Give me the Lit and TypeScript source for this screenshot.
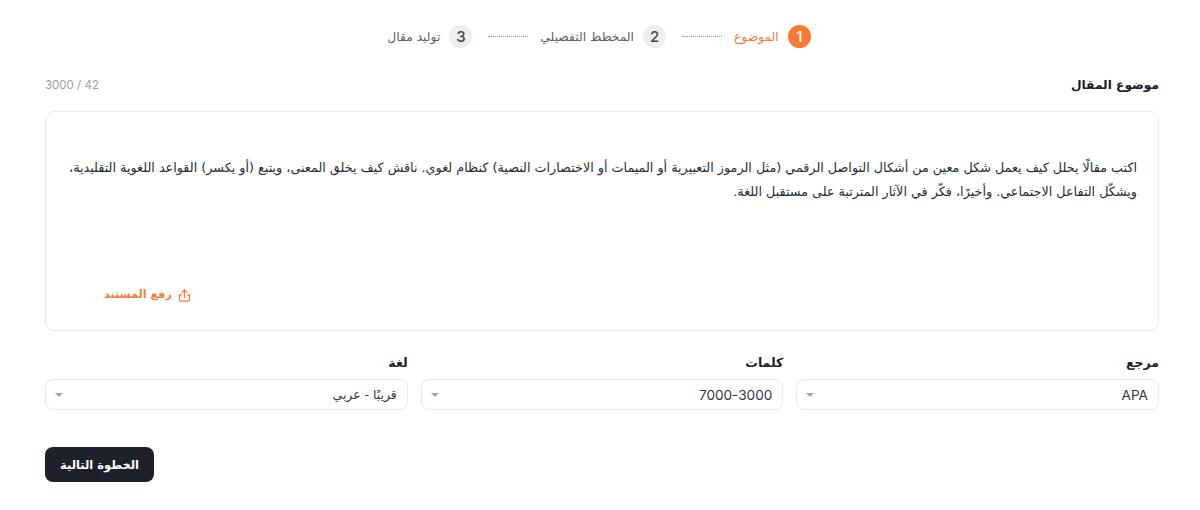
import { LitElement, html, css } from 'lit';
import { customElement } from 'lit/decorators.js';

const steps = [
  { n: '1', label: 'الموضوع', active: true },
  { n: '2', label: 'المخطط التفصيلي', active: false },
  { n: '3', label: 'توليد مقال', active: false },
];

const selects = [
  { label: 'مرجع', value: 'APA', ar: false },
  { label: 'كلمات', value: '7000-3000', ar: false },
  { label: 'لغة', value: 'قريبًا - عربي', ar: true },
];

const topic =
  'اكتب مقالًا يحلل كيف يعمل شكل معين من أشكال التواصل الرقمي (مثل الرموز التعبيرية أو الميمات أو الاختصارات النصية) كنظام لغوي. ناقش كيف يخلق المعنى، ويتبع (أو يكسر) القواعد اللغوية التقليدية، ويشكّل التفاعل الاجتماعي. وأخيرًا، فكّر في الآثار المترتبة على مستقبل اللغة.';

@customElement('app-root')
export class AppRoot extends LitElement {
  static styles = css`
    :host {
      display: block;
      background: #fff;
      font-family: 'DejaVu Sans', 'Noto Sans', sans-serif;
      color: #1f2430;
    }

    .page {
      direction: rtl;
      box-sizing: border-box;
      height: 510px;
      padding: 25px 41px 0 45px;
      overflow: hidden;
    }

    .stepper {
      display: flex;
      justify-content: center;
      align-items: center;
      height: 23px;
      padding-right: 6px;
    }

    .step {
      display: flex;
      align-items: center;
      gap: 9px;
      font-size: 12.3px;
      color: #5d6068;
      white-space: nowrap;
    }

    .step.active {
      color: #f47a3c;
    }

    .num {
      width: 23px;
      height: 23px;
      border-radius: 50%;
      background: #eceef0;
      color: #44474e;
      font: 500 15px Inter, sans-serif;
      display: flex;
      align-items: center;
      justify-content: center;
    }

    .active .num {
      background: #f67a32;
      color: #fff;
    }

    .dots {
      width: 40px;
      margin: 0 12px 0 16px;
      border-top: 1px dotted #8a8c91;
    }

    .field-head {
      display: flex;
      justify-content: space-between;
      align-items: center;
      margin-top: 27px;
      height: 20px;
    }

    .title {
      font-size: 12.2px;
      font-weight: 700;
      color: #1d2027;
    }

    .select-label {
      font-size: 12.5px;
      font-weight: 700;
      color: #1d2027;
    }

    .count {
      font: 11.5px Inter, sans-serif;
      color: #9a9ca1;
      direction: ltr;
    }

    .box {
      position: relative;
      box-sizing: border-box;
      height: 220px;
      margin-top: 16px;
      padding: 44px 21px 0 18px;
      border: 1px solid #e9eaec;
      border-radius: 9px;
      font-size: 12.75px;
      line-height: 24px;
      color: #2a2c33;
    }

    .upload {
      position: absolute;
      left: 58px;
      bottom: 25px;
      display: flex;
      align-items: center;
      gap: 5px;
      font-size: 11.2px;
      font-weight: 700;
      color: #f47a3c;
      line-height: 20px;
    }

    .upload svg {
      width: 15px;
      height: 15px;
    }

    .selects {
      display: grid;
      grid-template-columns: repeat(3, 1fr);
      gap: 13px;
      margin-top: 22px;
    }

    .select-label {
      height: 20px;
      line-height: 20px;
      margin-bottom: 6px;
    }

    .select {
      box-sizing: border-box;
      height: 31px;
      display: flex;
      justify-content: space-between;
      align-items: center;
      padding: 0 10px 0 9px;
      border: 1px solid #e9eaec;
      border-radius: 8px;
      font: 13.6px Inter, sans-serif;
      color: #33363c;
    }

    .select .ar {
      font: 12.4px 'DejaVu Sans', sans-serif;
    }

    .caret {
      width: 0;
      height: 0;
      border-left: 4px solid transparent;
      border-right: 4px solid transparent;
      border-top: 4px solid #a3a5a9;
    }

    .actions {
      display: flex;
      justify-content: flex-end;
      margin-top: 37px;
    }

    button {
      width: 109px;
      height: 35px;
      border: 0;
      border-radius: 8px;
      background: #1e212b;
      color: #fff;
      font: 700 11.5px 'DejaVu Sans', sans-serif;
    }
  `;

  render() {
    return html`
      <div class="page">
        <div class="stepper">
          ${steps.map(
            (s, i) => html`
              ${i > 0 ? html`<span class="dots"></span>` : ''}
              <div class="step ${s.active ? 'active' : ''}">
                <span class="num">${s.n}</span>
                <span>${s.label}</span>
              </div>
            `
          )}
        </div>

        <div class="field-head">
          <span class="title">موضوع المقال</span>
          <span class="count">3000 / 42</span>
        </div>

        <div class="box">
          ${topic}
          <div class="upload">
            <svg viewBox="0 0 24 24" fill="none" stroke="currentColor" stroke-width="2" stroke-linecap="round" stroke-linejoin="round">
              <path d="M7 11H4v7a3 3 0 0 0 3 3h10a3 3 0 0 0 3-3v-7h-3" />
              <path d="M12 15V3" />
              <path d="M8 7l4-4 4 4" />
            </svg>
            <span>رفع المستند</span>
          </div>
        </div>

        <div class="selects">
          ${selects.map(
            (s) => html`
              <div>
                <div class="select-label">${s.label}</div>
                <div class="select">
                  <span class=${s.ar ? 'ar' : ''}>${s.value}</span>
                  <span class="caret"></span>
                </div>
              </div>
            `
          )}
        </div>

        <div class="actions">
          <button>الخطوة التالية</button>
        </div>
      </div>
    `;
  }
}
